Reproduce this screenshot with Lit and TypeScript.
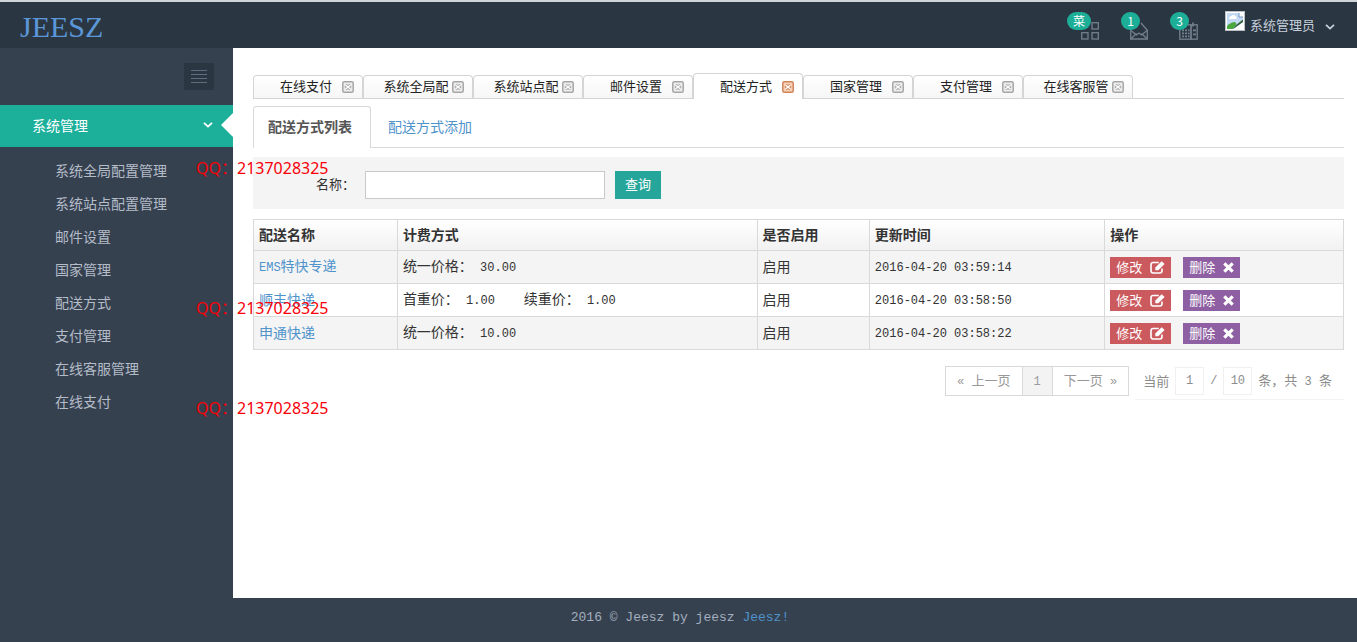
import { LitElement, html, css, svg } from "lit";
import { customElement, property, state } from "lit/decorators.js";
import { classMap } from "lit/directives/class-map.js";

const base = css`
  *, *::before, *::after { box-sizing: border-box; }
  a { color: #4f93cb; text-decoration: none; }
  button, input { font: inherit; margin: 0; padding: 0; border: 0; border-radius: 0; background: none; color: inherit; }
  button { cursor: pointer; }
  ul { list-style: none; margin: 0; padding: 0; }
  svg { display: block; }
  .num { font-family: "Liberation Mono", monospace; font-size: 12px; white-space: pre; }
`;

const chevron = svg`<svg width="10" height="6" viewBox="0 0 10 6" fill="none" stroke="currentColor" stroke-width="1.8"><path d="M1 .8 5 4.6 9 .8"/></svg>`;

const gridIcon = svg`<svg width="18" height="18" viewBox="0 0 18 18" fill="none" stroke="currentColor" stroke-width="1.3"><rect x="11" y=".7" width="6.3" height="6.3"/><rect x=".7" y="10.7" width="6.3" height="6.3"/><rect x="11" y="10.7" width="6.3" height="6.3"/></svg>`;

const mailIcon = svg`<svg width="18" height="18" viewBox="0 0 18 18" fill="none" stroke="currentColor" stroke-width="1.3"><path d="M.7 8.3V17h16.6V8.3L11 1"/><path d="M.9 16.8l5.600-5.200M17.1 16.8l-5.600-5.200M.9 8.500l5.600 4.500 2.500-2 2.500 2 5.600-4.500"/></svg>`;

const calendarIcon = svg`<svg width="19" height="18" viewBox="0 0 19 18" fill="none" stroke="currentColor" stroke-width="1.3"><rect x=".8" y="2.8" width="17.4" height="14.4"/><path d="M5 .5v4M14 .5v4M3 8.300h2M6 8.300h2M3 11.300h2M6 11.300h2M3 14.300h2M6 14.300h2M9 8.300h1.500M9 11.300h1.500M9 14.300h1.500M12 3v14M14 8.300h3M14 12.300h3" stroke-width="1.7"/></svg>`;

const brokenImage = svg`<svg width="20" height="20" viewBox="0 0 20 20"><rect x=".5" y=".5" width="19" height="19" fill="#fff" stroke="#b9bfc4"/><path d="M2 2h12l4 4v5L9 18H2z" fill="#c3d9f4"/><path d="M4 8q0-3 2.500-3 1.500-2 4 0 2 1 1 3z" fill="#fff"/><path d="M2 18v-3q4-4 8-4 2 1 1 3l-3 4z" fill="#4aa83c"/><path d="M8 18l3-4 7-5.500V11z" fill="#35613a"/><path d="M14 2v4h4" fill="#fff" stroke="#5c86b8" stroke-width=".8"/></svg>`;

const editIcon = svg`<svg width="15" height="13" viewBox="0 0 15 13"><path d="M12 7.500v2.300q0 2.200-2.200 2.200H3.200Q1 12 1 9.800V3.700q0-2.200 2.200-2.200h5.600" fill="none" stroke="currentColor" stroke-width="1.600"/><path d="M11.700.300l2.900 2.700-6.300 6.200H5.300V6.400z" fill="currentColor"/></svg>`;

const timesIcon = svg`<svg width="11" height="11" viewBox="0 0 11 11" fill="none" stroke="currentColor" stroke-width="3.200"><path d="M1.300 1.300l8.400 8.400M9.700 1.300 1.300 9.700"/></svg>`;

const closeIcon = svg`<svg width="12" height="12" viewBox="0 0 12 12" fill="none"><rect x=".8" y=".8" width="10.400" height="10.400" rx="1.500" fill="var(--fill)" stroke="currentColor" stroke-width="1.500"/><path d="M3.500 4l5 4M8.500 4l-5 4" stroke="currentColor" stroke-width="3.200"/><path d="M3.500 4l5 4M8.500 4l-5 4" stroke="#fff" stroke-width="1.400"/></svg>`;

@customElement("top-bar")
class TopBar extends LitElement {
  static styles = [base, css`
    :host { display: flex; justify-content: space-between; height: 48px; padding: 0 22px 0 20px; background: #2b3643; border-top: 2px solid #cfd5d6; }
    .logo { font: 30px/50px "Liberation Serif", serif; color: #5b97d8; }
    .tools { display: flex; }
    .tool { position: relative; width: 20px; height: 38px; margin-right: 29px; padding-top: 19px; color: #74808e; }
    .tool:nth-of-type(3) { margin-right: 26px; }
    .badge { position: absolute; right: 10px; top: 10px; min-width: 18px; height: 18px; padding: 0 6px; border-radius: 9px; background: #1cae97; color: #fff; font-size: 12px; line-height: 18px; text-align: center; }
    .user { display: flex; align-items: flex-start; gap: 5px; color: #c6cfda; font-size: 13px; line-height: 20px; padding-top: 9px; }
    .name { padding-top: 4px; }
    .arrow { padding: 13px 0 0 5px; }
  `];
  render() {
    return html`
      <a class="logo" href="#">JEESZ</a>
      <div class="tools">
        <button class="tool" aria-label="菜单">${gridIcon}<span class="badge">菜</span></button>
        <button class="tool" aria-label="消息">${mailIcon}<span class="badge">1</span></button>
        <button class="tool" aria-label="日程">${calendarIcon}<span class="badge">3</span></button>
        <button class="user">${brokenImage}<span class="name">系统管理员</span><span class="arrow">${chevron}</span></button>
      </div>`;
  }
}

@customElement("side-menu")
class SideMenu extends LitElement {
  @state() private items = ["系统全局配置管理", "系统站点配置管理", "邮件设置", "国家管理", "配送方式", "支付管理", "在线客服管理", "在线支付"];
  static styles = [base, css`
    :host { display: block; width: 233px; flex: none; background: #364150; font-size: 14px; }
    .head { display: flex; justify-content: flex-end; padding: 15px 19px; }
    .toggle { width: 30px; height: 27px; display: grid; place-items: center; background: #2b3643; color: #606c7f; }
    .group { position: relative; display: flex; align-items: center; justify-content: space-between; height: 42px; padding: 0 20px 2px 32px; background: #1caf9a; color: #fff; }
    .group::after { content: ""; position: absolute; right: 0; top: 8px; border: 12px solid transparent; border-left: 0; border-right-color: #fff; }
    .list { padding: 7px 0; }
    .item { display: block; padding-left: 55px; line-height: 33px; color: #b4bcc8; }
  `];
  render() {
    return html`
      <div class="head"><button class="toggle" aria-label="收起菜单"><svg width="16" height="14" viewBox="0 0 16 14" stroke="currentColor"><path d="M0 .5h16M0 4.500h16M0 8.500h16M0 12.500h16"/></svg></button></div>
      <a class="group" href="#"><span>系统管理</span>${chevron}</a>
      <ul class="list">${this.items.map((t) => html`<li><a class="item" href="#">${t}</a></li>`)}</ul>`;
  }
}

@customElement("page-tabs")
class PageTabs extends LitElement {
  @state() private active = 4;
  private tabs = ["在线支付", "系统全局配", "系统站点配", "邮件设置", "配送方式", "国家管理", "支付管理", "在线客服管"];
  static styles = [base, css`
    :host { display: block; }
    .bar { display: flex; align-items: flex-end; height: 26px; border-bottom: 1px solid #d5d5d5; }
    .tab { display: flex; align-items: center; width: 110px; height: 23px; padding: 0 8px 0 14px; border: 1px solid #d5d5d5; border-bottom: 0; border-radius: 4px 4px 0 0; background: linear-gradient(#fff, #f6f6f6); color: #222; font-size: 13px; }
    .tab.on { height: 26px; margin-bottom: -1px; background: #fff; }
    .label { flex: 1; text-align: center; line-height: 20px; padding: 0 0 2px 2px; white-space: nowrap; }
    .close { --fill: #eee; color: #a6a6a6; }
    .on .close { --fill: #f6d2b8; color: #d28458; }
  `];
  render() {
    return html`<div class="bar">${this.tabs.map((t, i) => html`
      <div class=${classMap({ tab: true, on: i === this.active })}>
        <button class="label" @click=${() => { this.active = i; }}>${t}</button>
        <button class="close" aria-label="关闭">${closeIcon}</button>
      </div>`)}</div>`;
  }
}

interface Row { name: unknown; fee: unknown; time: string; }
const n = (t: string) => html`<span class="num">${t}</span>`;

@customElement("delivery-table")
class DeliveryTable extends LitElement {
  @property({ attribute: false }) rows: Row[] = [
    { name: html`${n("EMS")}特快专递`, fee: html`统一价格：${n(" 30.00")}`, time: "2016-04-20 03:59:14" },
    { name: "顺丰快递", fee: html`首重价：${n(" 1.00    ")}续重价：${n(" 1.00")}`, time: "2016-04-20 03:58:50" },
    { name: "申通快递", fee: html`统一价格：${n(" 10.00")}`, time: "2016-04-20 03:58:22" },
  ];
  static styles = [base, css`
    :host { display: block; }
    table { width: 100%; table-layout: fixed; border-collapse: collapse; border: 1px solid #d9d9d9; font-size: 14px; line-height: 20px; color: #333; }
    th, td { border: 1px solid #d9d9d9; padding: 0 5px 2px; text-align: left; white-space: nowrap; }
    th { height: 31px; font-weight: 700; }
    td { height: 33px; }
    td:last-child { padding-bottom: 0; }
    thead tr { background: linear-gradient(#fff, #f1f1f1); }
    tbody tr:nth-child(odd) { background: #f4f4f4; }
    .c1 { width: 13.2%; } .c2 { width: 33%; } .c3 { width: 10.3%; } .c4 { width: 21.6%; }
    .acts { display: flex; gap: 12px; }
    .btn { display: flex; align-items: center; gap: 8px; height: 21px; padding: 0 6px; font-size: 13px; color: #fff; }
    .edit { background: #cb5a5e; }
    .del { background: #8e5fa2; }
  `];
  render() {
    return html`<table>
      <thead><tr><th class="c1">配送名称</th><th class="c2">计费方式</th><th class="c3">是否启用</th><th class="c4">更新时间</th><th>操作</th></tr></thead>
      <tbody>${this.rows.map((r) => html`<tr>
        <td><a href="#">${r.name}</a></td><td>${r.fee}</td><td>启用</td><td>${n(r.time)}</td>
        <td><div class="acts"><button class="btn edit">修改${editIcon}</button><button class="btn del">删除${timesIcon}</button></div></td>
      </tr>`)}</tbody></table>`;
  }
}

@customElement("page-nav")
class PageNav extends LitElement {
  static styles = [base, css`
    :host { display: flex; justify-content: flex-end; align-items: flex-start; font-size: 13px; color: #8c8c8c; line-height: 28px; }
    .pages { display: flex; border: 1px solid #d9d9d9; }
    .pages a { height: 28px; line-height: 26px; padding: 0 11px; color: #999; }
    .pages a + a { border-left: 1px solid #d9d9d9; }
    .pages .cur { background: #f3f3f3; }
    .info { display: flex; align-items: center; gap: 6px; height: 34px; margin-left: 6px; padding: 0 12px 4px 8px; border-bottom: 1px solid #f3f3f3; white-space: pre; }
    .info input { width: 29px; height: 28px; border: 1px solid #f0f0f0; text-align: center; }
  `];
  render() {
    return html`
      <nav class="pages"><a href="#">${n("« ")}上一页</a><a class="cur" href="#">${n("1")}</a><a href="#">下一页${n(" »")}</a></nav>
      <div class="info"><label for="page">当前</label><input id="page" class="num" value="1">${n("/")}<input class="num" aria-label="每页条数" value="10"><span>条，共${n(" 3 ")}条</span></div>`;
  }
}

@customElement("app-root")
class AppRoot extends LitElement {
  static styles = [base, css`
    :host { position: relative; display: flex; flex-direction: column; min-height: 100vh; background: #364150; font-family: "Noto Sans CJK SC", "Liberation Sans", sans-serif; color: #333; }
    .body { flex: 1; display: flex; }
    main { flex: 1; min-width: 0; padding: 25px 13px 25px 20px; background: #fff; }
    .subtabs { display: flex; margin-top: 7px; height: 42px; border-bottom: 1px solid #d9d9d9; font-size: 14px; line-height: 40px; }
    .subtabs a { padding: 0 17px; }
    .subtabs .on { height: 42px; padding: 0 18px 0 14px; border: 1px solid #d9d9d9; border-bottom: 0; border-radius: 3px 3px 0 0; background: #fff; color: #555; font-weight: 700; line-height: 38px; }
    .search { display: flex; align-items: center; margin: 9px 0 10px; height: 52px; padding: 3px 0 0 63px; background: #f4f4f4; font-size: 13px; }
    .search label { padding-bottom: 2px; }
    .search input { width: 240px; height: 28px; margin-left: 10px; padding: 0 6px; border: 1px solid #c9c9c9; background: #fff; }
    .search button { width: 46px; height: 28px; margin-left: 10px; padding-bottom: 2px; background: #26a69a; color: #fff; }
    page-nav { margin-top: 16px; }
    footer { height: 44px; padding-left: 3px; text-align: center; font: 13px/40px "Liberation Mono", monospace; color: #a3afbf; }
    .mark { position: absolute; left: 196px; font: 16px/20px "Noto Sans", "Noto Sans CJK SC", sans-serif; color: #f80008; pointer-events: none; }
    .m1 { top: 158px; } .m2 { top: 298px; } .m3 { top: 398px; }
  `];
  render() {
    return html`
      <top-bar></top-bar>
      <div class="body">
        <side-menu></side-menu>
        <main>
          <page-tabs></page-tabs>
          <nav class="subtabs"><a class="on" href="#">配送方式列表</a><a href="#">配送方式添加</a></nav>
          <form class="search" @submit=${(e: Event) => e.preventDefault()}>
            <label for="name">名称：</label><input id="name" type="text"><button>查询</button>
          </form>
          <delivery-table></delivery-table>
          <page-nav></page-nav>
        </main>
      </div>
      <footer>2016 © Jeesz by jeesz <a href="#">Jeesz!</a></footer>
      ${["m1", "m2", "m3"].map((c) => html`<span class="mark ${c}">QQ：2137028325</span>`)}`;
  }
}
